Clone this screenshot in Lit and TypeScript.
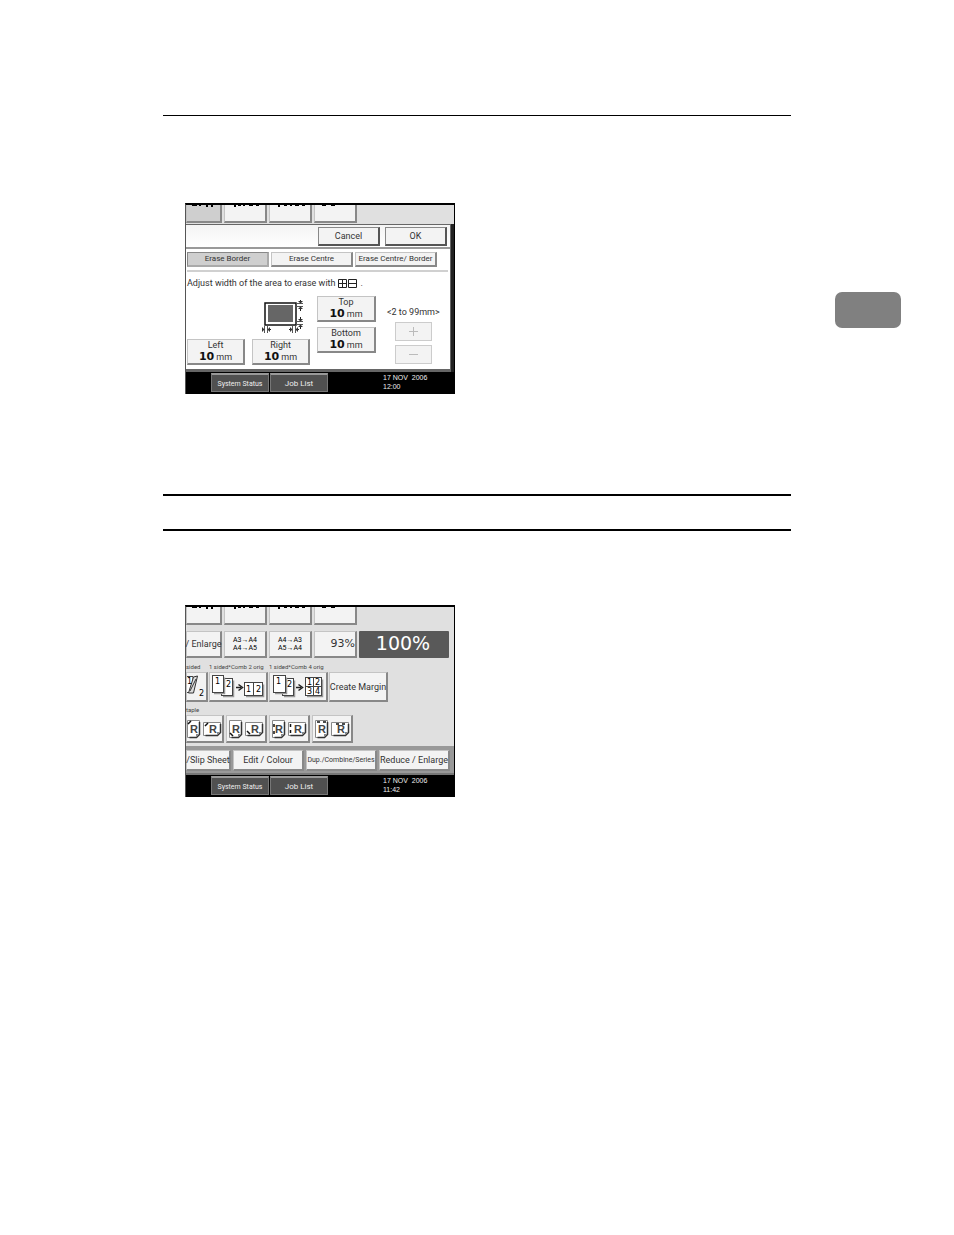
import { LitElement, html, svg, css } from "lit";
import { customElement } from "lit/decorators.js";

const keys = css`
  :host,
  * {
    box-sizing: border-box;
  }
  button {
    display: flex;
    flex: none;
    align-items: center;
    justify-content: center;
    margin: 0;
    padding: 0;
    border: 1px solid;
    border-color: #c4c4c4 #888 #888 #c4c4c4;
    border-width: 1px 2px 2px 1px;
    background: #f3f3f3;
    color: #333;
    font: inherit;
    white-space: nowrap;
  }
  svg {
    display: block;
    flex: none;
  }
`;

const screen = css`
  :host {
    display: block;
    width: 270px;
    border: 1px solid #000;
    border-width: 2px 1px 0 1px;
    border-left-color: #555;
    color: #333;
    font: 9px/12px Roboto, "Liberation Sans", sans-serif;
  }
`;

/* Lower edge of the row of paper keys that has scrolled out of view. */
@customElement("cut-row")
class CutRow extends LitElement {
  static properties = { selected: { type: Boolean } };
  declare selected: boolean;
  static styles = [
    keys,
    css`
      :host {
        display: flex;
        gap: 2px;
        height: 19px;
        background: #e0e0e0;
      }
      button {
        width: 43px;
        height: 18px;
        border-top: 0;
        align-items: flex-start;
      }
      button:first-child {
        width: 36px;
      }
      button.selected {
        background: #cfcfcf;
      }
    `,
  ];
  render() {
    const marks = ["M4 0h5M11 0h2M19 0v2M24 0v2", "M6 0v2M9 0h3M15 0v1M20 0h4M27 0h3", "M5 0v2M10 0h3M17 0v1M21 0h4M28 0h3", "M3 0h4M12 0h4"];
    return marks.map(
      (d, i) => html`<button class=${this.selected && i === 0 ? "selected" : ""} aria-label="Paper tray ${i + 1}">
        <svg width="32" height="3" viewBox="0 0 32 3"><path d=${d} stroke="#000" stroke-width="2" fill="none" /></svg>
      </button>`
    );
  }
}

@customElement("status-bar")
class StatusBar extends LitElement {
  static properties = { time: {} };
  declare time: string;
  static styles = [
    keys,
    css`
      :host {
        display: flex;
        gap: 1px;
        height: 22px;
        padding: 1px 0 0 25px;
        background: #000;
      }
      button {
        width: 58px;
        height: 19px;
        padding-top: 2px;
        background: #505050;
        border-color: #999 #777 #777 #777;
        border-width: 2px 1px 1px 1px;
        color: #eee;
        font-size: 8px;
      }
      .small {
        font-size: 7px;
      }
      .clock {
        margin-left: 54px;
        font: 7px/9px "Liberation Sans", sans-serif;
        color: #eee;
        white-space: pre;
      }
    `,
  ];
  render() {
    return html`<button class="small">System Status</button><button>Job List</button>
      <div class="clock">17 NOV  2006
${this.time}</div>`;
  }
}

@customElement("erase-screen")
class EraseScreen extends LitElement {
  static styles = [
    keys,
    screen,
    css`
      :host {
        background: #222;
      }
      .dialog {
        height: 148px;
        margin-right: 3px;
        background: #fff;
        border: solid #666;
        border-width: 1px 1px 3px 0;
      }
      .head {
        display: flex;
        justify-content: flex-end;
        gap: 5px;
        height: 24px;
        padding: 2px 3px 0 0;
        border-bottom: 2px solid #999;
        background: linear-gradient(#f4f4f4, #fff);
      }
      .head button {
        width: 62px;
        height: 19px;
        border-color: #888 #555 #555 #888;
      }
      .tabs {
        display: flex;
        gap: 2px;
        margin: 3px 2px 0 1px;
        padding-bottom: 3px;
        border-bottom: 2px solid #d0d0d0;
        font-size: 8px;
      }
      .tabs button {
        width: 82px;
        height: 15px;
      }
      .tabs button.selected {
        background: #cfcfcf;
        border-color: #888 #aaa #aaa #888;
      }
      .hint {
        display: flex;
        align-items: center;
        gap: 3px;
        height: 22px;
        margin: 0;
        padding-left: 1px;
      }
      .body {
        display: flex;
        padding-left: 1px;
        gap: 7px;
      }
      .sides {
        display: grid;
        grid-template-columns: 58px 58px;
        column-gap: 7px;
        row-gap: 3px;
        align-content: start;
        padding-top: 6px;
      }
      .sides svg {
        grid-column: 2;
        margin-left: 10px;
      }
      .ends {
        display: flex;
        flex-direction: column;
        gap: 5px;
        padding-top: 2px;
      }
      .width {
        width: 59px;
        height: 26px;
        flex-direction: column;
        line-height: 11px;
      }
      .sides .width {
        width: 58px;
      }
      .value {
        display: flex;
        gap: 2px;
        align-items: baseline;
      }
      .value b {
        font: bold 11px/11px "DejaVu Sans", sans-serif;
        color: #111;
      }
      .range {
        display: flex;
        flex-direction: column;
        align-items: center;
        gap: 4px;
        padding: 12px 0 0 4px;
        white-space: nowrap;
      }
      .range button {
        width: 37px;
        height: 19px;
        border-width: 1px;
        border-color: #ccc;
      }
    `,
  ];
  side(name: string) {
    return html`<button class="width">
      <span>${name}</span><span class="value"><b>10</b><span>mm</span></span>
    </button>`;
  }
  render() {
    return html`
      <cut-row selected></cut-row>
      <div class="dialog">
        <div class="head"><button>Cancel</button><button>OK</button></div>
        <div class="tabs">
          <button class="selected">Erase Border</button><button>Erase Centre</button><button>Erase Centre/ Border</button>
        </div>
        <p class="hint">
          <span>Adjust width of the area to erase with</span>
          <svg width="19" height="9" viewBox="0 0 19 9">
            <path d="M.5.5h8v8h-8zM4.500 .5v8M.5 4.500h8M10.500 .5h8v8h-8zM10.500 4.500h8" fill="none" stroke="#222" />
          </svg>
          <span>.</span>
        </p>
        <div class="body">
          <div class="sides">
            <svg width="42" height="36" viewBox="0 0 42 36">
              <rect x="3" y="3" width="31" height="22" fill="#fff" stroke="#111" stroke-width="1.500" />
              <rect x="6" y="5" width="25" height="17" fill="#666" />
              <path d="M34 3.500h7M34 6.500h7M34 21.500h7M34 24.500h7M2.500 26v7M5.500 26v7M30.500 26v7M33.500 26v7" stroke="#555" />
              <path d="M38.500 -1v4M38.500 7v4M38.500 17v4M38.500 25v4M-1 29.500h3M6 29.500h3M27 29.500h3M34 29.500h3" stroke="#222" />
              <path d="M36 1l2.500 2.500L41 1zM36 9l2.500-2.500L41 9zM36 19l2.500 2.500L41 19zM36 27l2.500-2.500L41 27zM0 27L2.500 29.500 0 32zM8 27L5.500 29.500 8 32zM28 27l2.500 2.500-2.500 2.500zM36 27L33.500 29.500l2.500 2.500z" fill="#333" />
            </svg>
            ${this.side("Left")}${this.side("Right")}
          </div>
          <div class="ends">${this.side("Top")}${this.side("Bottom")}</div>
          <div class="range">
            <span>&lt;2 to 99mm&gt;</span>
            <button disabled aria-label="Increase">
              <svg width="9" height="9" viewBox="0 0 9 9"><path d="M0 4.500h9M4.500 0v9" stroke="#bbb" /></svg>
            </button>
            <button disabled aria-label="Decrease">
              <svg width="9" height="9" viewBox="0 0 9 9"><path d="M0 4.500h9" stroke="#bbb" /></svg>
            </button>
          </div>
        </div>
      </div>
      <status-bar time="12:00"></status-bar>
    `;
  }
}

const sheet = (x: number, y: number, w: number, h: number) =>
  svg`<path d="M${x + 2} ${y + h + 0.5}h${w - 1.5}v${-h + 2}" fill="none" stroke="#999" stroke-width="1.500" />
    <rect x=${x + 0.5} y=${y + 0.5} width=${w - 1} height=${h - 1} fill="#fff" stroke="#444" />`;

const arrow = svg`<path d="M26 14.500h5" stroke="#222" stroke-width="1.500" /><path d="M28.500 11.500l4 3-4 3" fill="none" stroke="#222" stroke-width="1.500" />`;

/* A page whose lower right corner is folded. */
const folded = (x: number, y: number, w: number, h: number) =>
  svg`<path d="M${x + 0.5} ${y + 0.5}h${w}v${h - 3}l-3 3h${-w + 3}z" fill="#fff" stroke="#888" />
    <path d="M${x + w + 0.5} ${y + 2}v${h - 4.5}l-3 3h${-w + 5}" fill="none" stroke="#333" stroke-width="1.500" />
    <path d="M${x + w - 3} ${y + h}v-3h3z" fill="#888" />`;

@customElement("copy-screen")
class CopyScreen extends LitElement {
  static styles = [
    keys,
    screen,
    css`
      :host {
        background: #e0e0e0;
      }
      .row {
        display: flex;
        gap: 2px;
      }
      .ratios {
        padding-top: 5px;
      }
      .ratios button {
        width: 43px;
        height: 27px;
      }
      .ratios .cut {
        width: 36px;
      }
      .ratios .paper {
        font-size: 7px;
        line-height: 8px;
        color: #000;
      }
      .ratios .percent {
        justify-content: flex-end;
        font: 11px/12px "DejaVu Sans", sans-serif;
      }
      output {
        display: flex;
        align-items: center;
        justify-content: center;
        width: 90px;
        height: 27px;
        padding: 0 2px 3px 0;
        background: #595959;
        border-radius: 1px;
        color: #fff;
        font: 19px/20px "DejaVu Sans", sans-serif;
      }
      .captions {
        height: 14px;
        padding-top: 3px;
        font-size: 6px;
        color: #444;
        white-space: nowrap;
      }
      .captions span {
        width: 58px;
      }
      .captions span:first-child {
        width: 21px;
      }
      .layouts {
        gap: 1px;
      }
      .layouts button {
        width: 59px;
        height: 30px;
      }
      .layouts .cut {
        width: 22px;
      }
      .staple {
        height: 13px;
        padding-top: 2px;
        font-size: 6px;
        color: #444;
      }
      .staples button {
        width: 41px;
        height: 28px;
      }
      .staples .cut {
        width: 38px;
      }
      .modes {
        height: 29px;
        margin-top: 3px;
        padding-top: 4px;
        background: #999;
        border-bottom: 2px solid #777;
      }
      .modes button {
        width: 71px;
        height: 21px;
      }
      .modes .cut {
        width: 45px;
      }
      .modes .small {
        font-size: 7px;
      }
      text {
        font: 8px "DejaVu Sans", sans-serif;
        fill: #000;
      }
      .letter {
        font: bold 11px "Liberation Sans", sans-serif;
        fill: #444;
      }
    `,
  ];
  pair(marks: string) {
    return svg`
      ${folded(1, 3, 12, 17)}${folded(17, 5, 17, 13)}
      <text class="letter" x="4" y="16">R</text><text class="letter" x="23" y="16">R</text>
      <path d=${marks} stroke="#111" stroke-width="1.500" fill="none" />`;
  }
  render() {
    return html`
      <cut-row></cut-row>
      <div class="row ratios">
        <button class="cut">/ Enlarge</button>
        <button class="paper">A3→A4<br />A4→A5</button>
        <button class="paper">A4→A3<br />A5→A4</button>
        <button class="percent">93%</button>
        <output>100%</output>
      </div>
      <div class="row captions"><span>sided</span><span>1 sided*Comb 2 orig</span><span>1 sided*Comb 4 orig</span></div>
      <div class="row layouts">
        <button class="cut" aria-label="2 sided">
          <svg width="19" height="27" viewBox="0 0 19 27">
            <path d="M0 3.500h6v16H0" fill="#fff" stroke="#444" /><path d="M6.500 4l4-1-4 17h-5z" fill="#ddd" stroke="#333" /><path d="M3 18L9 6" stroke="#333" />
            <text x="0" y="11">1</text><text x="12" y="23">2</text>
          </svg>
        </button>
        <button aria-label="1 sided, combine 2 originals">
          <svg width="56" height="27" viewBox="0 0 56 27">
            ${sheet(11, 5, 12, 18)}${sheet(2, 2, 12, 18)}${arrow}${sheet(34, 9, 19, 14)}
            <path d="M43.500 10v12" stroke="#444" />
            <text x="5" y="11">1</text><text x="16" y="14">2</text><text x="36" y="19">1</text><text x="46" y="19">2</text>
          </svg>
        </button>
        <button aria-label="1 sided, combine 4 originals">
          <svg width="56" height="27" viewBox="0 0 56 27">
            ${sheet(12, 5, 12, 18)}${sheet(3, 2, 13, 18)}${arrow}${sheet(35, 4, 17, 19)}
            <path d="M43.500 5v17M36 13.500h15" stroke="#444" />
            <text x="6" y="11">1</text><text x="17" y="14">2</text><text x="37" y="12">1</text><text x="45" y="12">2</text><text x="37" y="21">3</text><text x="45" y="21">4</text>
          </svg>
        </button>
        <button>Create Margin</button>
      </div>
      <div class="staple">taple</div>
      <div class="row staples">
        <button class="cut" aria-label="Staple top left"><svg width="35" height="24" viewBox="1 0 35 24">${this.pair("M2 7l3-3M19 9l3-3")}</svg></button>
        <button aria-label="Staple bottom left"><svg width="36" height="24" viewBox="0 0 36 24">${this.pair("M2 16l3 3M19 14l3 3")}</svg></button>
        <button aria-label="Staple two left"><svg width="36" height="24" viewBox="0 0 36 24">${this.pair("M3 7v3M3 14v3M19.500 7v3M19.500 13v3")}</svg></button>
        <button aria-label="Staple two top"><svg width="36" height="24" viewBox="0 0 36 24">${this.pair("M3 5h3M9 5h3M22 7h3M28 7h3")}</svg></button>
      </div>
      <div class="row modes">
        <button class="cut">/Slip Sheet</button>
        <button>Edit / Colour</button>
        <button class="small">Dup./Combine/Series</button>
        <button>Reduce / Enlarge</button>
      </div>
      <status-bar time="11:42"></status-bar>
    `;
  }
}

@customElement("app-root")
class AppRoot extends LitElement {
  static styles = css`
    :host {
      display: grid;
      grid-template-columns: 1fr 119px;
      column-gap: 44px;
      box-sizing: border-box;
      min-height: 100vh;
      padding: 115px 0 0 163px;
      background: #fff;
    }
    .page {
      border-top: 1px solid #000;
    }
    erase-screen {
      margin: 87px 0 0 22px;
    }
    .title {
      box-sizing: border-box;
      height: 37px;
      margin: 100px 0 74px;
      border: solid #000;
      border-width: 2px 0;
    }
    copy-screen {
      margin-left: 22px;
    }
    .tab {
      width: 66px;
      height: 36px;
      margin-top: 177px;
      border-radius: 7px;
      background: #808080;
    }
  `;
  render() {
    return html`
      <main class="page">
        <erase-screen></erase-screen>
        <div class="title"></div>
        <copy-screen></copy-screen>
      </main>
      <aside><div class="tab"></div></aside>
    `;
  }
}
